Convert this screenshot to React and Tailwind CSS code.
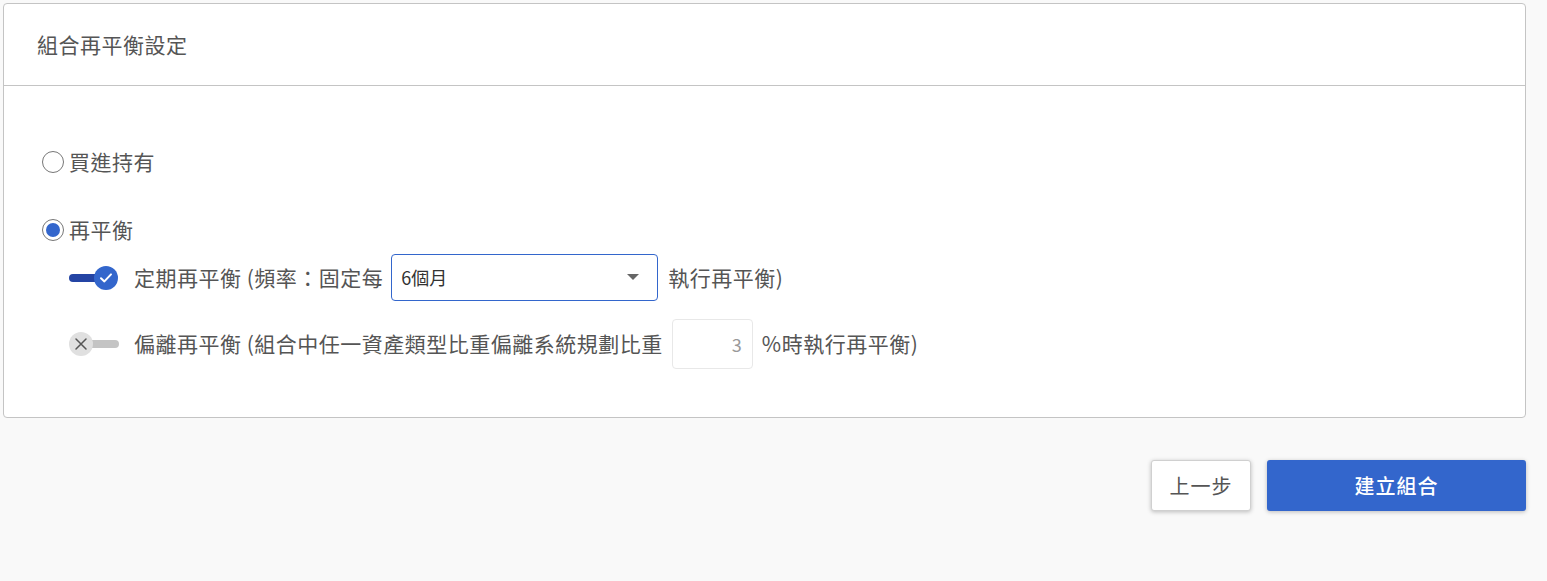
import React from "react";

const font = { fontFamily: '"Noto Sans CJK TC", "Noto Sans", sans-serif' };

function Radio({ checked }) {
  return (
    <span className="flex h-[22px] w-[22px] items-center justify-center rounded-full border border-[#777] bg-white">
      {checked && <span className="h-[14px] w-[14px] rounded-full bg-[#3366cc]" />}
    </span>
  );
}

function ToggleOn() {
  return (
    <span className="relative flex h-[26px] w-[50px] items-center">
      <span className="h-[8px] w-[40px] rounded-full bg-[#2444a4]" />
      <span className="absolute left-[25px] top-[1px] flex h-[24px] w-[24px] items-center justify-center rounded-full bg-[#3366cc]">
        <svg width="16" height="16" viewBox="0 0 16 16" fill="none">
          <path d="M3 8.2 L6.4 11.4 L13 4.4" stroke="white" strokeWidth="2" strokeLinecap="round" strokeLinejoin="round" />
        </svg>
      </span>
    </span>
  );
}

function ToggleOff() {
  return (
    <span className="relative flex h-[26px] w-[50px] items-center justify-end">
      <span className="h-[8px] w-[38px] rounded-full bg-[#c4c4c4]" />
      <span className="absolute left-0 top-[1px] flex h-[24px] w-[24px] items-center justify-center rounded-full bg-[#e0e0e0]">
        <svg width="16" height="16" viewBox="0 0 16 16" fill="none">
          <path d="M3 3 L13 13 M13 3 L3 13" stroke="#555" strokeWidth="1.5" strokeLinecap="round" />
        </svg>
      </span>
    </span>
  );
}

export default function App() {
  return (
    <div className="min-h-[581px] w-full bg-[#f9f9f9] pl-[3px] pt-[3px] text-[#555]" style={font}>
      <div className="w-[1523px] rounded-[4px] border border-[#c4c4c4] bg-white">
        <div className="flex h-[82px] items-center border-b border-[#c4c4c4] px-[33px] text-[21px] tracking-[0.5px]">
          組合再平衡設定
        </div>
        <div className="flex flex-col pb-[48px] pl-[38px] pt-[61px] text-[21px] tracking-[0.5px]">
          <label className="flex h-[30px] items-center gap-[5px]">
            <Radio />
            <span>買進持有</span>
          </label>
          <label className="mt-[38px] flex h-[30px] items-center gap-[5px]">
            <Radio checked />
            <span>再平衡</span>
          </label>
          <div className="ml-[27px] mt-[9px] flex h-[47px] items-center">
            <ToggleOn />
            <span className="ml-[15px]">定期再平衡 (頻率：固定每</span>
            <div className="ml-[8px] flex h-[47px] w-[267px] items-center justify-between rounded-[4px] border border-[#3366cc] pl-[9px] pr-[18px] text-[18px] tracking-normal text-[#333]">
              <span>6個月</span>
              <svg width="12" height="7" viewBox="0 0 12 7">
                <path d="M0 0 L12 0 L6 6 Z" fill="#666" />
              </svg>
            </div>
            <span className="ml-[10px]">執行再平衡)</span>
          </div>
          <div className="ml-[27px] mt-[18px] flex h-[50px] items-center">
            <ToggleOff />
            <span className="ml-[15px]">偏離再平衡 (組合中任一資產類型比重偏離系統規劃比重</span>
            <div className="ml-[9px] flex h-[50px] w-[81px] items-center justify-end rounded-[4px] border border-[#e8e8e8] pr-[10px] text-[18px] tracking-normal text-[#999]">
              3
            </div>
            <span className="ml-[9px]">%時執行再平衡)</span>
          </div>
        </div>
      </div>
      <div className="mt-[42px] flex w-[1523px] justify-end gap-[16px]">
        <button className="h-[51px] w-[100px] rounded-[3px] border border-[#d0d0d0] bg-white text-[20px] tracking-[1px] text-[#555] shadow-[0_1px_4px_rgba(0,0,0,0.25)]">
          上一步
        </button>
        <button className="h-[51px] w-[259px] rounded-[3px] bg-[#3366cc] text-[20px] font-medium tracking-[1px] text-white shadow-[0_1px_4px_rgba(0,0,0,0.25)]">
          建立組合
        </button>
      </div>
    </div>
  );
}
